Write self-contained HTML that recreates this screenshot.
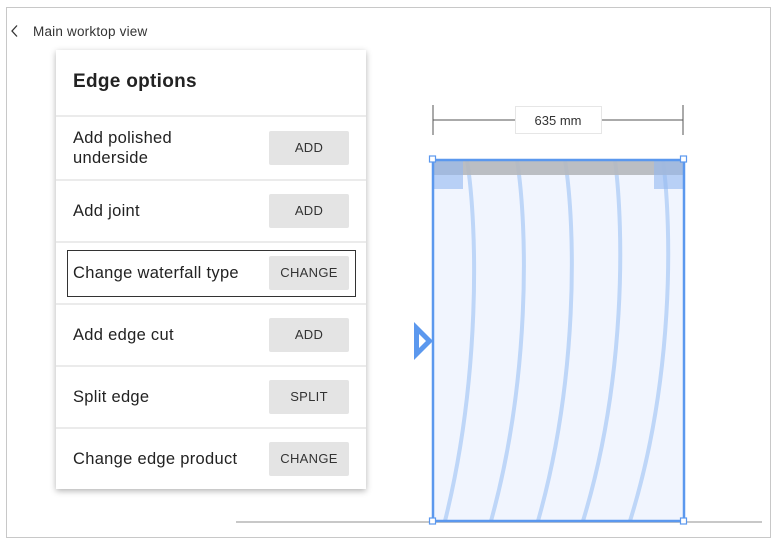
<!DOCTYPE html>
<html><head><style>
body{margin:0;width:777px;height:545px;background:#fff;font-family:"Liberation Sans",sans-serif;position:relative;overflow:hidden}
.frame{position:absolute;left:6px;top:7px;width:763px;height:529px;border:1px solid #c8c8c8}
.back{position:absolute;left:33px;top:24px;font-size:13.5px;color:#333;letter-spacing:.2px}
.panel{position:absolute;left:56px;top:50px;width:310px;height:439px;background:#fff;box-shadow:0 2px 6px rgba(0,0,0,.3)}
.hd{height:65px;border-bottom:2px solid #ebebeb;font-weight:bold;font-size:19px;color:#222;padding-left:17px;line-height:64px;letter-spacing:.3px}
.row{position:relative;height:60px;border-bottom:2px solid #ebebeb;font-size:16.5px;color:#222;letter-spacing:.3px}
.row .t{position:absolute;left:17px;top:50%;transform:translateY(-50%);line-height:20px}
.row .b{position:absolute;left:213px;top:50%;transform:translateY(-50%);width:80px;height:34px;background:#e4e4e4;border-radius:2px;font-size:13px;color:#333;text-align:center;line-height:34px;letter-spacing:.3px}
.sel{position:absolute;left:11px;top:7px;width:287px;height:45px;border:1px solid #333}
</style></head><body>
<div class="frame"></div>
<svg width="10" height="14" style="position:absolute;left:10px;top:24px"><path d="M7,1.5 L2,7 L7,12.5" fill="none" stroke="#333" stroke-width="1.3"/></svg>
<div class="back">Main worktop view</div>
<div class="panel">
<div class="hd">Edge options</div>
<div class="row" style="height:62px"><div class="t">Add polished<br>underside</div><div class="b">ADD</div></div>
<div class="row"><div class="t">Add joint</div><div class="b">ADD</div></div>
<div class="row"><div class="sel"></div><div class="t">Change waterfall type</div><div class="b">CHANGE</div></div>
<div class="row"><div class="t">Add edge cut</div><div class="b">ADD</div></div>
<div class="row"><div class="t">Split edge</div><div class="b">SPLIT</div></div>
<div class="row" style="border:none"><div class="t">Change edge product</div><div class="b">CHANGE</div></div>
</div>
<svg width="777" height="545" style="position:absolute;left:0;top:0;pointer-events:none">
<line x1="236" y1="522" x2="762" y2="522" stroke="#c8c8c8" stroke-width="2"/>
<line x1="433" y1="105" x2="433" y2="135" stroke="#555"/>
<line x1="683" y1="105" x2="683" y2="135" stroke="#555"/>
<line x1="433" y1="120" x2="516" y2="120" stroke="#555"/>
<line x1="602" y1="120" x2="683" y2="120" stroke="#555"/>
<rect x="515.5" y="106.5" width="86" height="27" fill="#fff" stroke="#e6e6e6"/>
<text x="558" y="125" text-anchor="middle" font-size="13" fill="#333" font-family="Liberation Sans">635 mm</text>
<rect x="433" y="160" width="251" height="361" fill="#f1f5fe"/>
<g fill="none" stroke="#bed6f8" stroke-width="4">
<path d="M467,160 C478,230 480,380 445,521"/>
<path d="M517,160 C528,230 530,380 491,521"/>
<path d="M565,160 C576,230 578,380 538,521"/>
<path d="M615,160 C624,230 626,380 583,521"/>
<path d="M663,160 C672,230 674,380 630,521"/>
</g>
<rect x="434" y="161" width="250" height="14" fill="#b5b8bd" opacity=".9"/>
<rect x="433" y="160" width="30" height="29" fill="#92b8f0" opacity=".6"/>
<rect x="654" y="160" width="30" height="29" fill="#92b8f0" opacity=".6"/>
<rect x="433" y="160" width="251" height="361" fill="none" stroke="#5b98ee" stroke-width="2.5"/>
<g fill="#fff" stroke="#5b98ee" stroke-width="1.2">
<rect x="429.5" y="156" width="6" height="6"/><rect x="680.5" y="156" width="6" height="6"/>
<rect x="429.5" y="518" width="6" height="6"/><rect x="680.5" y="518" width="6" height="6"/>
</g>
<path d="M414,322 L433,341 L414,360 Z" fill="#5b98ee"/>
<path d="M419,334 L426,341 L419,348 Z" fill="#fff"/>
</svg>
</body></html>
